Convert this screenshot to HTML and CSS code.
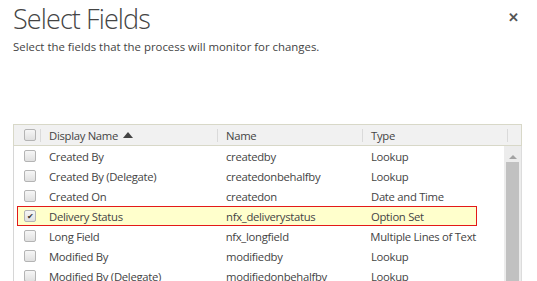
FILE: index.html
```html
<!DOCTYPE html>
<html>

<head>
    <title>Select Fields</title>
    <link rel="stylesheet" href="styles.css">
</head>

<body>
    <div class="dialog">
        <div class="top">
            <h1>Select Fields</h1>
            <button class="close">&#x2715;</button>
        </div>
        <p class="desc">Select the fields that the process will monitor for changes.</p>

        <div class="grid">
            <div class="grid-head">
                <div class="cell check"><span class="box"></span></div>
                <div class="cell display">Display Name <span class="sort"></span></div>
                <div class="cell name">Name</div>
                <div class="cell type">Type</div>
                <div class="cell spacer"></div>
            </div>
            <div class="grid-body">
                <div class="rows">
                    <div class="row">
                        <div class="check"><span class="box"></span></div>
                        <div class="display">Created By</div>
                        <div class="name">createdby</div>
                        <div class="type">Lookup</div>
                    </div>
                    <div class="row">
                        <div class="check"><span class="box"></span></div>
                        <div class="display">Created By (Delegate)</div>
                        <div class="name">createdonbehalfby</div>
                        <div class="type">Lookup</div>
                    </div>
                    <div class="row">
                        <div class="check"><span class="box"></span></div>
                        <div class="display">Created On</div>
                        <div class="name">createdon</div>
                        <div class="type">Date and Time</div>
                    </div>
                    <div class="row selected">
                        <div class="check"><span class="box checked">&#10004;</span></div>
                        <div class="display">Delivery Status</div>
                        <div class="name">nfx_deliverystatus</div>
                        <div class="type">Option Set</div>
                    </div>
                    <div class="row">
                        <div class="check"><span class="box"></span></div>
                        <div class="display">Long Field</div>
                        <div class="name">nfx_longfield</div>
                        <div class="type">Multiple Lines of Text</div>
                    </div>
                    <div class="row">
                        <div class="check"><span class="box"></span></div>
                        <div class="display">Modified By</div>
                        <div class="name">modifiedby</div>
                        <div class="type">Lookup</div>
                    </div>
                    <div class="row">
                        <div class="check"><span class="box"></span></div>
                        <div class="display">Modified By (Delegate)</div>
                        <div class="name">modifiedonbehalfby</div>
                        <div class="type">Lookup</div>
                    </div>
                </div>
                <div class="scrollbar">
                    <div class="arrow"></div>
                    <div class="thumb"></div>
                </div>
            </div>
        </div>
    </div>
</body>

</html>
```

FILE: styles.css
```css
* {
    box-sizing: border-box;
}

body {
    margin: 0;
    background: white;
    color: #444;
    font-family: "Open Sans", sans-serif;
    overflow: hidden;
}

.dialog {
    padding: 0 15px 0 13px;
}

.top {
    display: flex;
    justify-content: space-between;
    align-items: flex-start;
}

h1 {
    margin: 0;
    font-weight: 300;
    font-size: 27px;
    line-height: 38px;
    color: #444;
    letter-spacing: -0.9px;
}

.close {
    background: none;
    border: none;
    padding: 0;
    margin: 10px 3px 0 0;
    font-size: 13px;
    color: #555;
    font-weight: bold;
    cursor: pointer;
}

.desc {
    margin: 1px 0 0;
    font-size: 11.4px;
    line-height: 16px;
}

.grid {
    margin-top: 69px;
    font-size: 11.3px;
    letter-spacing: -0.3px;
    width: 509px;
}

.grid-head {
    display: flex;
    height: 22px;
    align-items: center;
    background: #f1f1f1;
    border: 1px solid #d8d8c8;
}

.grid-head .cell {
    height: 13px;
    line-height: 13px;
    display: flex;
    align-items: center;
}

.grid-head .cell + .cell {
    border-left: 1px solid #dadada;
    padding-left: 8px;
}

.grid-head .check {
    width: 26px;
    padding-left: 10px;
}

.grid-head .display {
    width: 177px;
}

.grid-head .name,
.grid-head .type {
    width: 145px;
}

.grid-head .spacer {
    flex: 1;
}

/* sort direction triangle */
.sort {
    width: 0;
    height: 0;
    margin-left: 5px;
    border-left: 5px solid transparent;
    border-right: 5px solid transparent;
    border-bottom: 6px solid #444;
}

.box {
    display: inline-block;
    width: 12px;
    height: 12px;
    border: 1px solid #b4b4b4;
    border-radius: 2px;
    background: linear-gradient(#f6f6f6, #e0e0e0);
    letter-spacing: 0;
}

.box.checked {
    font-size: 8px;
    line-height: 10px;
    text-align: center;
    color: #333;
}

.grid-body {
    display: flex;
    border-left: 1px solid #d6d6d6;
    height: 140px;
}

.rows {
    width: 463px;
    padding-left: 3px;
}

.row {
    display: flex;
    width: 460px;
    height: 20px;
    align-items: center;
    border: 1px solid transparent;
}

.row .check {
    width: 22px;
    padding-left: 6px;
    display: flex;
    align-items: center;
}

.row .display,
.row .name,
.row .type {
    padding-left: 9px;
    white-space: nowrap;
}

.row .display {
    width: 177px;
}

.row .name {
    width: 145px;
}

.row .type {
    flex: 1;
}

.row.selected {
    background: #ffffcc;
    border-color: #e31919;
}

.scrollbar {
    margin-left: auto;
    width: 18px;
    background: #ececec;
    border-right: 1px solid #dcdcdc;
    display: flex;
    flex-direction: column;
    align-items: center;
}

.arrow {
    margin-top: 9px;
    width: 0;
    height: 0;
    border-left: 4px solid transparent;
    border-right: 4px solid transparent;
    border-bottom: 4px solid #a3a3a3;
}

.thumb {
    margin-top: 3px;
    width: 13px;
    flex: 1;
    background: #c1c1c1;
}
```
